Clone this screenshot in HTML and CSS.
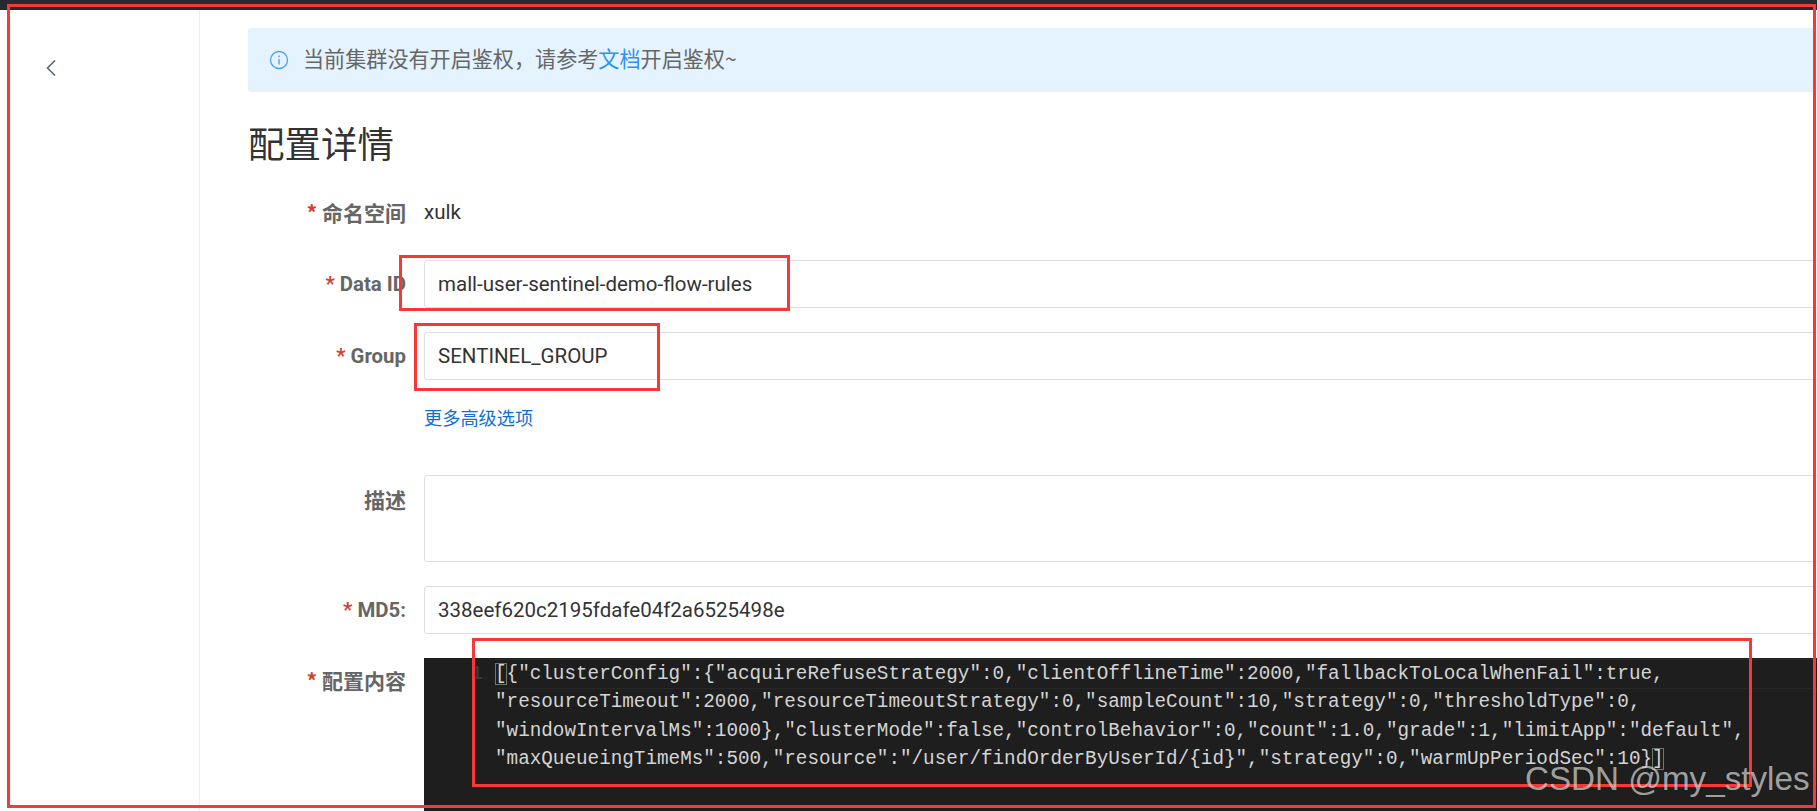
FILE: index.html
```html
<!DOCTYPE html>
<html lang="zh-CN">
<head>
<meta charset="utf-8">
<title>配置详情</title>
<link rel="stylesheet" href="styles.css">
</head>
<body>
<div class="page">
  <div class="topbar"></div>
  <div class="shell">
    <aside class="sidebar">
      <svg class="back" width="12" height="18" viewBox="0 0 12 18"><path d="M10 1.5 2.5 9l7.5 7.5" fill="none" stroke="#546478" stroke-width="1.6"/></svg>
    </aside>
    <main class="main">
      <div class="alert">
        <svg class="info" width="20" height="20" viewBox="0 0 20 20"><circle cx="10" cy="10" r="8.5" fill="none" stroke="#4d9ff5" stroke-width="1.3"/><path d="M10 5.6v1.6M10 9v5.4" stroke="#4d9ff5" stroke-width="1.4"/></svg>
        <span class="alert-text">当前集群没有开启鉴权，请参考<a class="doc" href="#">文档</a>开启鉴权~</span>
      </div>
      <h1 class="title">配置详情</h1>
      <div class="row">
        <label class="label"><span class="star">*</span> 命名空间</label>
        <div class="plain">xulk</div>
      </div>
      <div class="row">
        <label class="label label-en"><span class="star">*</span> Data ID</label>
        <div class="field">mall-user-sentinel-demo-flow-rules</div>
      </div>
      <div class="row row-tight">
        <label class="label label-en"><span class="star">*</span> Group</label>
        <div class="field">SENTINEL_GROUP</div>
      </div>
      <div class="row row-link">
        <div class="label"></div>
        <a class="more" href="#">更多高级选项</a>
      </div>
      <div class="row">
        <label class="label label-desc">描述</label>
        <div class="field field-area"></div>
      </div>
      <div class="row">
        <label class="label label-en"><span class="star">*</span> MD5:</label>
        <div class="field">338eef620c2195fdafe04f2a6525498e</div>
      </div>
      <div class="row row-editor">
        <label class="label label-code"><span class="star">*</span> 配置内容</label>
        <div class="editor">
          <div class="gutter">1</div>
          <div class="code">
            <div class="cline cline-current"><span class="match">[</span>{"clusterConfig":{"acquireRefuseStrategy":0,"clientOfflineTime":2000,"fallbackToLocalWhenFail":true,</div>
            <div class="cline">"resourceTimeout":2000,"resourceTimeoutStrategy":0,"sampleCount":10,"strategy":0,"thresholdType":0,</div>
            <div class="cline">"windowIntervalMs":1000},"clusterMode":false,"controlBehavior":0,"count":1.0,"grade":1,"limitApp":"default",</div>
            <div class="cline">"maxQueueingTimeMs":500,"resource":"/user/findOrderByUserId/{id}","strategy":0,"warmUpPeriodSec":10}<span class="match">]</span></div>
          </div>
        </div>
      </div>
    </main>
  </div>
  <div class="mark mark-frame"></div>
  <div class="mark mark-dataid"></div>
  <div class="mark mark-group"></div>
  <div class="mark mark-code"></div>
  <div class="watermark">CSDN @my_styles</div>
</div>
</body>
</html>
```
FILE: styles.css
```css
* { box-sizing: border-box; }
html, body { margin: 0; padding: 0; background: #fff; }
body { font-family: Roboto, "Noto Sans CJK SC", sans-serif; color: #333; }
.page { position: relative; width: 1817px; height: 811px; overflow: hidden; display: flex; flex-direction: column; }
.topbar { height: 10px; background: #262a30; flex: none; }
.shell { display: flex; flex: 1; min-height: 0; }
.sidebar { width: 200px; flex: none; border-right: 1px solid #eceef0; padding: 49px 0 0 45px; }
.back { display: block; }
.main { flex: 1; min-width: 0; padding: 18px 0 0 48px; overflow: hidden; }
.alert { width: 1600px; height: 64px; background: #e4f3fe; border-radius: 3px; display: flex; align-items: center; padding-left: 21px; gap: 14px; font-size: 21.1px; color: #666; font-family: "Noto Sans CJK SC", sans-serif; }
.alert-text { margin-top: -4px; }
.info { flex: none; }
.doc { color: #2a93f5; text-decoration: none; }
.title { margin: 27px 0 21px; font-size: 36.5px; line-height: 48px; font-weight: 400; color: #333; font-family: "Noto Sans CJK SC", sans-serif; }
.row { display: flex; width: 1600px; margin-bottom: 24px; }
.row-tight { margin-bottom: 0; }
.row-link { margin-bottom: 0; height: 95px; padding-top: 23px; }
.row-editor { margin-bottom: 0; }
.label { width: 158px; margin-right: 18px; flex: none; text-align: right; font-size: 21px; font-weight: 700; color: #666; line-height: 48px; font-family: "Noto Sans CJK SC", sans-serif; }
.label-en { font-family: Roboto, "Noto Sans CJK SC", sans-serif; font-size: 20.4px; }
.label-desc { line-height: 48px; }
.label-code { line-height: 44px; }
.star { color: #d2402c; font-weight: 700; }
.plain { font-size: 20.5px; line-height: 48px; color: #333; }
.field { flex: 1; height: 48px; border: 1px solid #dcdee3; border-radius: 3px; padding: 0 13px; font-size: 20.5px; line-height: 46px; color: #333; }
.field-area { height: 87px; }
.more { color: #1170d6; text-decoration: none; font-size: 18.2px; line-height: 28px; font-family: "Noto Sans CJK SC", sans-serif; }
.editor { flex: 1; height: 200px; background: #1e1e1e; display: flex; font-family: "Liberation Mono", monospace; font-size: 19.3px; line-height: 28.5px; color: #d4d4d4; padding-top: 1.5px; }
.gutter { width: 71px; flex: none; padding-left: 47px; color: #3a3a3a; font-weight: 700; }
.code { flex: 1; }
.cline { height: 28.5px; white-space: pre; }
.cline-current { box-shadow: 0 -1px 0 #282828, 0 1px 0 #282828; }
.match { outline: 1px solid #6b7b6b; outline-offset: -1px; }
.mark { position: absolute; border: 3px solid #f83838; pointer-events: none; }
.mark-frame { left: 7px; top: 4px; width: 1809px; height: 804px; }
.mark-dataid { left: 399px; top: 255px; width: 391px; height: 56px; }
.mark-group { left: 414px; top: 323px; width: 246px; height: 68px; }
.mark-code { left: 472px; top: 638px; width: 1280px; height: 149px; }
.watermark { position: absolute; left: 1525px; top: 757px; font-family: "Liberation Sans", sans-serif; font-size: 33.2px; line-height: 44px; color: rgba(255, 255, 255, 0.62); text-shadow: 0 0 1px rgba(0,0,0,.4); white-space: nowrap; }
```
